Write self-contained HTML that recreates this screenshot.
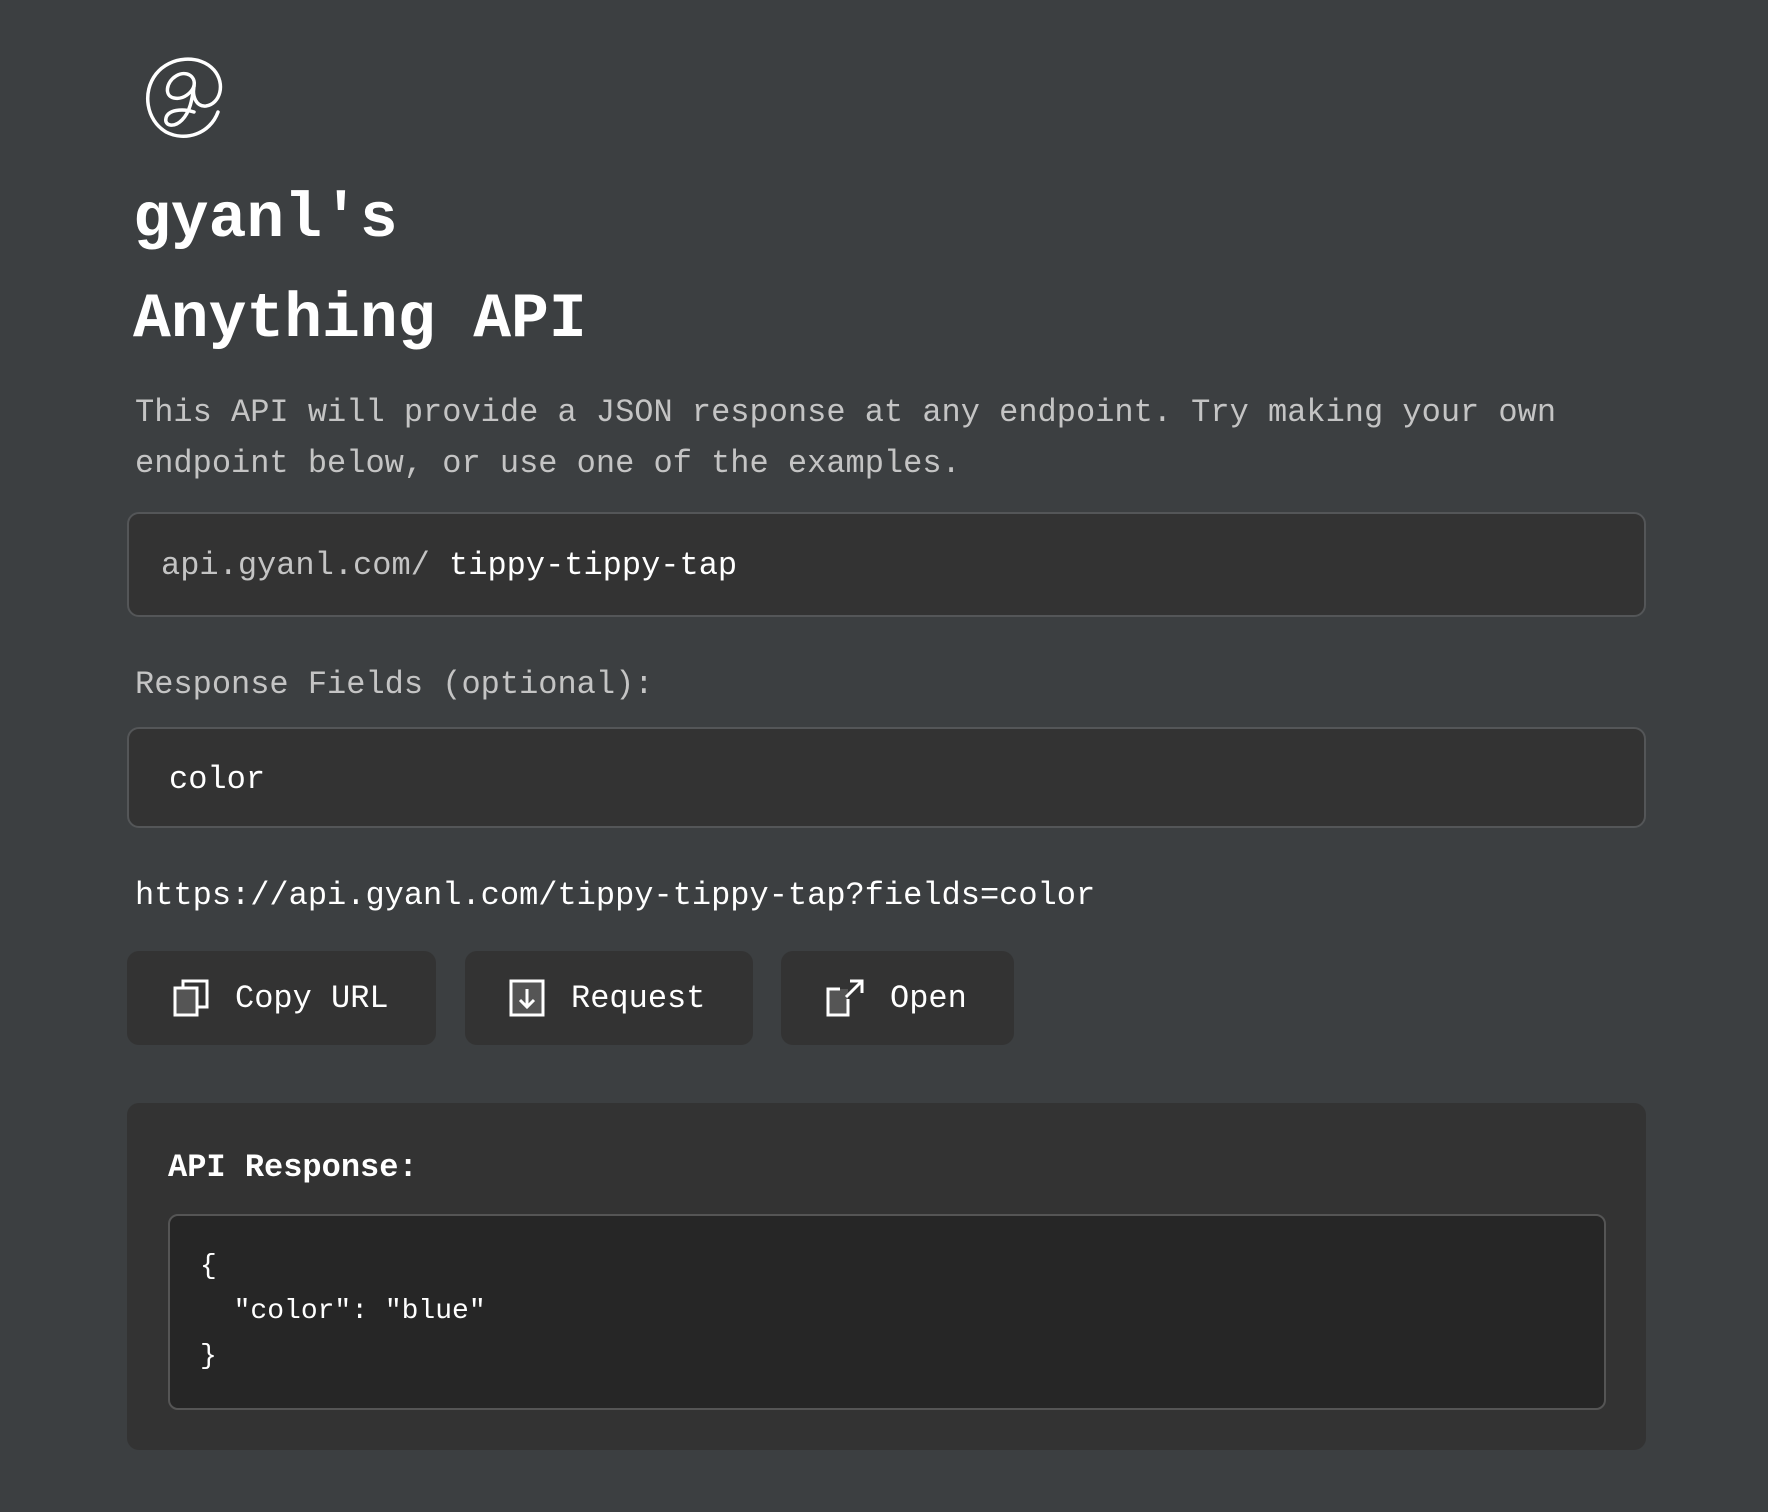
<!DOCTYPE html>
<html><head><meta charset="utf-8"><style>
*{margin:0;padding:0;box-sizing:border-box}
body{width:1768px;height:1512px;background:#3c3f41;font-family:"Liberation Mono","DejaVu Sans Mono",monospace;color:#fff;position:relative;overflow:hidden}
.a{position:absolute;white-space:pre}
.box{position:absolute;background:#333333;border:2px solid #545658;border-radius:12px}
.btn{position:absolute;background:#333333;border-radius:12px;top:951px;height:94px;font-size:32px;display:flex;align-items:center}
.btn svg{margin-right:26px}
</style></head><body>
<svg class="a" style="left:140px;top:52px" width="86" height="92" viewBox="0 0 86 92" fill="none" stroke="#fff" stroke-width="3.5" stroke-linecap="round">
<path d="M78 60 C70 82 45 90 26 80 C6 68 2 40 16 22 C30 4 60 2 74 18 C86 32 80 52 66 54 C56 55 52 44 54 34"/>
<path d="M54 34 C56 24 46 18 36 24 C26 30 24 44 34 46 C44 48 52 40 54 34 C52 48 50 60 42 68 C34 76 24 74 26 66 C28 58 42 56 54 60"/>
</svg>
<div class="a" style="left:133px;top:170px;font-size:63px;font-weight:bold;line-height:100px">gyanl's</div>
<div class="a" style="left:133px;top:270px;font-size:63px;font-weight:bold;line-height:100px">Anything API</div>
<div class="a" style="left:135px;top:387px;font-size:32px;line-height:51px;color:#c4c4c4">This API will provide a JSON response at any endpoint. Try making your own
endpoint below, or use one of the examples.</div>
<div class="box" style="left:127px;top:512px;width:1519px;height:105px"></div>
<div class="a" style="left:161px;top:547px;font-size:32px;line-height:38px"><span style="color:#c4c4c4">api.gyanl.com/ </span>tippy-tippy-tap</div>
<div class="a" style="left:135px;top:666px;font-size:32px;line-height:38px;color:#c4c4c4">Response Fields (optional):</div>
<div class="box" style="left:127px;top:727px;width:1519px;height:101px"></div>
<div class="a" style="left:169px;top:761px;font-size:32px;line-height:38px">color</div>
<div class="a" style="left:135px;top:877px;font-size:32px;line-height:38px">https://api.gyanl.com/tippy-tippy-tap?fields=color</div>
<div class="btn" style="left:127px;width:309px;padding-left:46px">
<svg width="36" height="38" viewBox="0 0 36 38" fill="none" stroke="#fff" stroke-width="3"><rect x="2" y="9" width="22" height="27" fill="#555"/><path d="M10 9V2h24v26H24"/></svg>Copy URL</div>
<div class="btn" style="left:465px;width:288px;padding-left:44px">
<svg width="36" height="38" viewBox="0 0 36 38" fill="none" stroke="#fff" stroke-width="3"><rect x="2" y="2" width="32" height="34" fill="#555"/><path d="M18 10v18M11 21l7 7 7-7"/></svg>Request</div>
<div class="btn" style="left:781px;width:233px;padding-left:45px">
<svg width="38" height="38" viewBox="0 0 38 38" fill="none" stroke="#fff" stroke-width="3"><rect x="2" y="10" width="20" height="26" fill="#555" stroke="none"/><path d="M22 20v16H2V10h12M20 18L36 2M24 2h12v12"/></svg>Open</div>
<div class="a" style="left:127px;top:1103px;width:1519px;height:347px;background:#333333;border-radius:12px"></div>
<div class="a" style="left:168px;top:1149px;font-size:32px;font-weight:bold;line-height:38px">API Response:</div>
<div class="a" style="left:168px;top:1214px;width:1438px;height:196px;background:#262626;border:2px solid #555;border-radius:10px"></div>
<div class="a" style="left:200px;top:1244px;font-size:28px;line-height:45px">{
  "color": "blue"
}</div>
</body></html>
